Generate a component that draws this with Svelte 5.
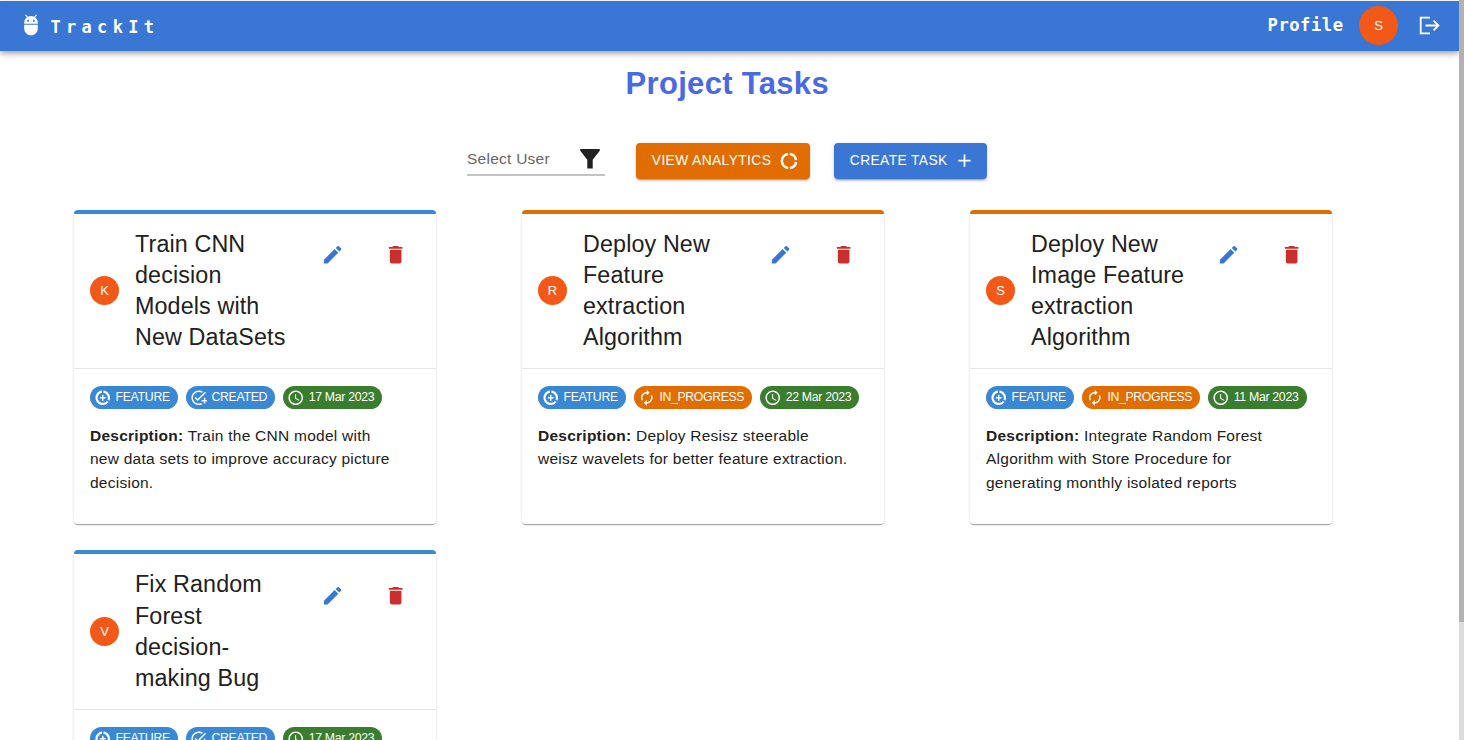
<script>
  const icons = {
    adb: 'M5 16c0 3.87 3.13 7 7 7s7-3.13 7-7v-4H5v4zM16.12 4.37l2.1-2.1-.82-.83-2.3 2.31C14.16 3.28 13.12 3 12 3s-2.16.28-3.09.75L6.6 1.44l-.82.83 2.1 2.1C6.14 5.64 5 7.68 5 10v1h14v-1c0-2.32-1.14-4.36-2.88-5.63zM9 9c-.55 0-1-.45-1-1s.45-1 1-1 1 .45 1 1-.45 1-1 1zm6 0c-.55 0-1-.45-1-1s.45-1 1-1 1 .45 1 1-.45 1-1 1z',
    edit: 'M3 17.25V21h3.75L17.81 9.94l-3.75-3.75L3 17.25zM20.71 7.04c.39-.39.39-1.02 0-1.41l-2.34-2.34a.9959.9959 0 0 0-1.41 0l-1.83 1.83 3.75 3.75 1.83-1.83z',
    del: 'M6 19c0 1.1.9 2 2 2h8c1.1 0 2-.9 2-2V7H6v12zM19 4h-3.5l-1-1h-5l-1 1H5v2h14V4z',
    clock: 'M11.99 2C6.47 2 2 6.48 2 12s4.47 10 9.99 10C17.52 22 22 17.52 22 12S17.52 2 11.99 2zM12 20c-4.42 0-8-3.58-8-8s3.58-8 8-8 8 3.58 8 8-3.58 8-8 8zM12.5 7H11v6l5.25 3.15.75-1.23-4.5-2.67z',
    progress: 'M12 6v3l4-4-4-4v3c-4.42 0-8 3.58-8 8 0 1.57.46 3.03 1.24 4.26L6.7 14.8c-.45-.83-.7-1.79-.7-2.8 0-3.31 2.69-6 6-6zm6.76 1.74L17.3 9.2c.44.84.7 1.79.7 2.8 0 3.31-2.69 6-6 6v-3l-4 4 4 4v-3c4.42 0 8-3.58 8-8 0-1.57-.46-3.03-1.24-4.26z',
    created: 'M22 5.18 10.59 16.6l-4.24-4.24 1.41-1.41 2.83 2.83 10-10L22 5.18zM12 20c-4.41 0-8-3.59-8-8s3.59-8 8-8c1.57 0 3.04.46 4.28 1.25l1.45-1.45C16.1 2.67 14.13 2 12 2 6.48 2 2 6.48 2 12s4.48 10 10 10c1.73 0 3.36-.44 4.78-1.22l-1.5-1.5c-1 .46-2.11.72-3.28.72zm7-5h-3v2h3v3h2v-3h3v-2h-3v-3h-2v3z',
    feature: 'M11 8v3H8v2h3v3h2v-3h3v-2h-3V8h-2zm2-5.95v3.03c3.39.49 6 3.39 6 6.92 0 .9-.18 1.75-.48 2.54l2.6 1.53c.56-1.24.88-2.62.88-4.07 0-5.18-3.95-9.45-9-9.95zM12 19c-3.87 0-7-3.13-7-7 0-3.53 2.61-6.43 6-6.92V2.05c-5.06.5-9 4.76-9 9.95 0 5.52 4.47 10 9.99 10 3.31 0 6.24-1.61 8.06-4.09l-2.6-1.53C16.17 17.98 14.21 19 12 19z',
    add: 'M19 13h-6v6h-2v-6H5v-2h6V5h2v6h6v2z'
  };
  const tasks = [
    { who: 'K', title: ['Train CNN', 'decision', 'Models with', 'New DataSets'], status: 'CREATED', date: '17 Mar 2023', text: ['Train the CNN model with', 'new data sets to improve accuracy picture', 'decision.'] },
    { who: 'R', title: ['Deploy New', 'Feature', 'extraction', 'Algorithm'], status: 'IN_PROGRESS', date: '22 Mar 2023', text: ['Deploy Resisz steerable', 'weisz wavelets for better feature extraction.'] },
    { who: 'S', title: ['Deploy New', 'Image Feature', 'extraction', 'Algorithm'], status: 'IN_PROGRESS', date: '11 Mar 2023', text: ['Integrate Random Forest', 'Algorithm with Store Procedure for', 'generating monthly isolated reports'] },
    { who: 'V', title: ['Fix Random', 'Forest', 'decision-', 'making Bug'], status: 'CREATED', date: '17 Mar 2023', text: [] }
  ];
</script>

{#snippet icon(name)}
  <svg class="icon" viewBox="0 0 24 24"><path d={icons[name]} /></svg>
{/snippet}

<div class="page">
  <header>
    <div class="brand">{@render icon('adb')}<span>TrackIt</span></div>
    <div class="account">
      <span class="profile">Profile</span>
      <span class="avatar big">S</span>
      <svg class="logout" viewBox="0 0 21 19"><path d="M11 1.7H1.7v15.6H11M6.5 9.5h12.5M14.6 4.7 19.4 9.5l-4.8 4.8" /></svg>
    </div>
  </header>
  <div class="scroll"><div class="thumb"></div></div>
  <main>
    <h1>Project Tasks</h1>
    <div class="tools">
      <div class="select"><span>Select User</span>
        <svg class="funnel" viewBox="0 0 20 20"><path d="M0 0h20v1.8L12.8 11v9H7.2v-9L0 1.8z" /></svg>
      </div>
      <button class="analytics">VIEW ANALYTICS
        <svg class="donut" viewBox="0 0 24 24"><path d="M13 3.55A8.5 8.5 0 0 1 20.45 11M20.45 13A8.5 8.5 0 0 1 13 20.45M11 20.45A8.5 8.5 0 0 1 11 3.55" /></svg>
      </button>
      <button class="create">CREATE TASK {@render icon('add')}</button>
    </div>
    <div class="grid">
      {#each tasks as t}
        <article class:progress={t.status === 'IN_PROGRESS'}>
          <div class="head">
            <span class="avatar">{t.who}</span>
            <h2>{#each t.title as line}<span>{line}</span>{/each}</h2>
            <div class="actions"><span class="edit">{@render icon('edit')}</span><span class="del">{@render icon('del')}</span></div>
          </div>
          <div class="body">
            <div class="chips">
              <span class="chip">{@render icon('feature')}<span>FEATURE</span></span>
              <span class="chip status">{@render icon(t.status === 'CREATED' ? 'created' : 'progress')}<span>{t.status}</span></span>
              <span class="chip date">{@render icon('clock')}<span>{t.date}</span></span>
            </div>
            {#if t.text.length}
              <p>{#each t.text as line, i}<span>{#if i === 0}<b>Description:</b>{' '}{/if}{line}</span>{/each}</p>
            {/if}
          </div>
        </article>
      {/each}
    </div>
  </main>
</div>

<style>
  :global(body) { background: #fff; overflow: hidden; }
  .page { width: 1464px; height: 740px; overflow: hidden; position: relative; box-sizing: border-box; padding-top: 1px; font-family: "Liberation Sans", Arial, sans-serif; color: #212121; background: #fff; }
  .icon { fill: currentColor; display: block; flex: none; }
  header { width: 1459px; height: 50px; box-sizing: border-box; padding: 0 19px 0 19px; background: #3a76d4; color: #fff; display: flex; align-items: center; justify-content: space-between; box-shadow: 0 2px 4px -1px #00000033, 0 4px 5px #00000024, 0 1px 10px #0000001f; }
  .brand, .account { display: flex; align-items: center; }
  .account { padding-bottom: 2px; }
  .brand .icon { width: 24px; height: 23.3px; margin-bottom: 2px; }
  .brand span { font: bold 17px/24px "DejaVu Sans Mono", monospace; letter-spacing: 5.3px; margin-left: 7.5px; padding-top: 2px; }
  .profile { font: bold 17.2px/24px "DejaVu Sans Mono", monospace; letter-spacing: .5px; margin-right: 15.5px; }
  .avatar { width: 29px; height: 29px; border-radius: 50%; background: #f25918; color: #fff; font-size: 13px; display: flex; align-items: center; justify-content: center; flex: none; margin-bottom: 1px; }
  .avatar.big { width: 39px; height: 39px; margin: 0 21px 0 0; }
  .logout { width: 21px; height: 19px; fill: none; stroke: #fff; stroke-width: 1.8; }
  .scroll { position: absolute; right: 0; top: 0; width: 5px; height: 740px; background: #dcdcdc; }
  .thumb { height: 622px; background: #b2b2b2; }
  main { width: 1459px; }
  h1 { margin: 0; padding-top: 12px; height: 40px; line-height: 41px; font-size: 31px; letter-spacing: .32px; color: #4b69e1; text-align: center; width: 1454.5px; }
  .tools { display: flex; margin: 40px 0 0 467px; height: 36px; }
  .select { width: 138px; height: 33px; box-sizing: border-box; border-bottom: 2px solid #c4c4c4; display: flex; align-items: center; justify-content: space-between; padding: 1px 5px 0 0; margin-right: 31px; font-size: 15.5px; letter-spacing: .25px; color: #666; }
  .funnel { width: 20px; height: 19.5px; fill: #212121; }
  button { border: 0; margin: 0 24px 0 0; padding: 0 0 1px 15.8px; height: 36px; border-radius: 4px; color: #fff; font: 13.8px "Liberation Sans", Arial, sans-serif; letter-spacing: .39px; display: flex; align-items: center; white-space: nowrap; box-shadow: 0 3px 1px -2px #00000033, 0 2px 2px #00000024, 0 1px 5px #0000001f; }
  .analytics { width: 174px; background: #e16d00; }
  .create { width: 153px; background: #3a76d4; }
  .donut { width: 20px; height: 20px; margin-left: 7.5px; fill: none; stroke: #fff; stroke-width: 3; }
  .create .icon { width: 21px; height: 21px; margin-left: 6.5px; }
  .grid { display: grid; grid-template-columns: repeat(3, 362px); column-gap: 86px; row-gap: 26.2px; margin: 30.7px 0 0 74px; }
  article { height: 314.5px; box-sizing: border-box; border-top: 4px solid #3a87d4; border-radius: 4px; box-shadow: 0 2px 1px -1px #00000033, 0 1px 1px #00000024, 0 1px 3px #0000001f; background: #fff; }
  article.progress { border-top-color: #e16d00; }
  .head { height: 155.4px; box-sizing: border-box; border-bottom: 1px solid #e6e6e6; padding: 0 28.4px 0 16px; display: flex; align-items: center; }
  h2 { margin: 0 0 0 16px; font-weight: 400; font-size: 23.3px; line-height: 31.05px; letter-spacing: .13px; width: 170px; }
  h2 span, p span { display: block; white-space: nowrap; }
  .actions { display: flex; gap: 39.7px; margin-left: auto; align-self: flex-start; padding-top: 29.5px; }
  .actions .icon { width: 23.3px; height: 23.3px; }
  .edit { color: #3a76d4; }
  .del { color: #c92f2f; }
  .body { padding: 17px 16px; }
  .chips { display: flex; gap: 8px; }
  .chip { display: flex; align-items: center; height: 23px; border-radius: 12px; background: #3a87d4; color: #fff; font-size: 12.3px; letter-spacing: -.3px; padding: 0 8px 0 4px; white-space: nowrap; }
  .chip span { padding-bottom: 1px; }
  .chip .icon { width: 17.5px; height: 17.5px; margin-right: 4px; }
  .progress .status { background: #e16d00; letter-spacing: -.37px; }
  .chip.date { background: #3b7d2e; }
  p { margin: 15px 0 0; font-size: 15.5px; line-height: 23.3px; letter-spacing: .25px; }
</style>
